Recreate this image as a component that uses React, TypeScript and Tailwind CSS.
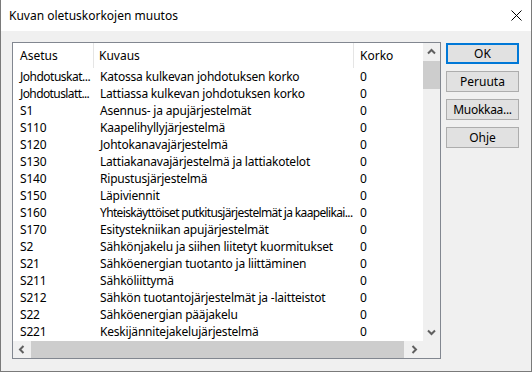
import React from "react";

const rows: [string, string, string, string?, string?][] = [
  ["Johdotuskat...", "Katossa kulkevan johdotuksen korko", "0", "tracking-[-0.5px]"],
  ["Johdotuslatt...", "Lattiassa kulkevan johdotuksen korko", "0", "tracking-[-0.6px]"],
  ["S1", "Asennus- ja apujärjestelmät", "0"],
  ["S110", "Kaapelihyllyjärjestelmä", "0"],
  ["S120", "Johtokanavajärjestelmä", "0"],
  ["S130", "Lattiakanavajärjestelmä ja lattiakotelot", "0"],
  ["S140", "Ripustusjärjestelmä", "0"],
  ["S150", "Läpiviennit", "0"],
  ["S160", "Yhteiskäyttöiset putkitusjärjestelmät ja kaapelikai...", "0", undefined, "tracking-[-0.65px]"],
  ["S170", "Esitystekniikan apujärjestelmät", "0"],
  ["S2", "Sähkönjakelu ja siihen liitetyt kuormitukset", "0"],
  ["S21", "Sähköenergian tuotanto ja liittäminen", "0"],
  ["S211", "Sähköliittymä", "0"],
  ["S212", "Sähkön tuotantojärjestelmät ja -laitteistot", "0"],
  ["S22", "Sähköenergian pääjakelu", "0"],
  ["S221", "Keskijännitejakelujärjestelmä", "0"],
];

function Chevron({ dir }: { dir: "up" | "down" | "left" | "right" }) {
  const rot = { up: 0, down: 180, left: 270, right: 90 }[dir];
  return (
    <svg width="9" height="9" viewBox="0 0 9 9" style={{ transform: `rotate(${rot}deg)` }}>
      <path d="M1 6.5 L4.5 3 L8 6.5" fill="none" stroke="#606060" strokeWidth="2" />
    </svg>
  );
}

export default function App() {
  return (
    <div className="w-[532px] h-[372px] bg-[#f0f0f0] border-x border-b border-[#7a7a7a] flex flex-col text-[12px] text-black font-['Noto_Sans',sans-serif] leading-none overflow-hidden">
      <div className="h-[31px] bg-white flex items-center pl-[8px] shrink-0">
        <span>Kuvan oletuskorkojen muutos</span>
        <svg className="ml-auto mr-[9px]" width="11" height="11" viewBox="0 0 11 11">
          <path d="M0.5 0.5 L10.5 10.5 M10.5 0.5 L0.5 10.5" stroke="#000" strokeWidth="1" />
        </svg>
      </div>
      <div className="flex pl-[11px] pt-[11px] gap-[5px]">
        <div className="w-[429px] h-[317px] border border-[#828790] bg-white flex flex-col">
          <div className="flex h-[298px]">
            <div className="w-[410px] flex flex-col overflow-hidden tracking-[-0.2px]">
              <div className="h-[25px] flex shrink-0 tracking-normal">
                <div className="w-[80px] pl-[7px] flex items-center">Asetus</div>
                <div className="w-px bg-[#e5e5e5]" />
                <div className="w-[259px] pl-[5px] flex items-center">Kuvaus</div>
                <div className="w-px bg-[#e5e5e5]" />
                <div className="flex-1 pl-[6px] flex items-center">Korko</div>
              </div>
              {rows.map((r, i) => (
                <div key={i} className="h-[17px] flex items-center shrink-0 whitespace-nowrap">
                  <div className={`w-[81px] pl-[7px] ${r[3] ?? ""}`}>{r[0]}</div>
                  <div className={`w-[260px] pl-[6px] ${r[4] ?? ""}`}>{r[1]}</div>
                  <div className="flex-1 pl-[6px]">{r[2]}</div>
                </div>
              ))}
            </div>
            <div className="w-[17px] bg-[#f0f0f0] flex flex-col">
              <div className="h-[17px] flex items-center justify-center">
                <Chevron dir="up" />
              </div>
              <div className="flex-1 flex flex-col">
                <div className="h-[28px] mt-[1px] bg-[#cdcdcd]" />
              </div>
              <div className="h-[17px] flex items-center justify-center">
                <Chevron dir="down" />
              </div>
            </div>
          </div>
          <div className="h-[17px] flex bg-[#f0f0f0]">
            <div className="w-[17px] flex items-center justify-center">
              <Chevron dir="left" />
            </div>
            <div className="w-[376px] flex">
              <div className="w-[373px] ml-px bg-[#cdcdcd]" />
            </div>
            <div className="w-[17px] flex items-center justify-center">
              <Chevron dir="right" />
            </div>
            <div className="flex-1" />
          </div>
        </div>
        <div className="flex flex-col gap-[7px] pt-[1px]">
          <button className="w-[73px] h-[21px] border-2 border-[#0078d7] bg-[#e1e1e1] flex items-center justify-center">OK</button>
          <button className="w-[73px] h-[21px] border border-[#adadad] bg-[#e1e1e1] flex items-center justify-center">Peruuta</button>
          <button className="w-[73px] h-[21px] border border-[#adadad] bg-[#e1e1e1] flex items-center justify-center tracking-[-0.3px]">Muokkaa...</button>
          <button className="w-[73px] h-[21px] border border-[#adadad] bg-[#e1e1e1] flex items-center justify-center">Ohje</button>
        </div>
      </div>
    </div>
  );
}
